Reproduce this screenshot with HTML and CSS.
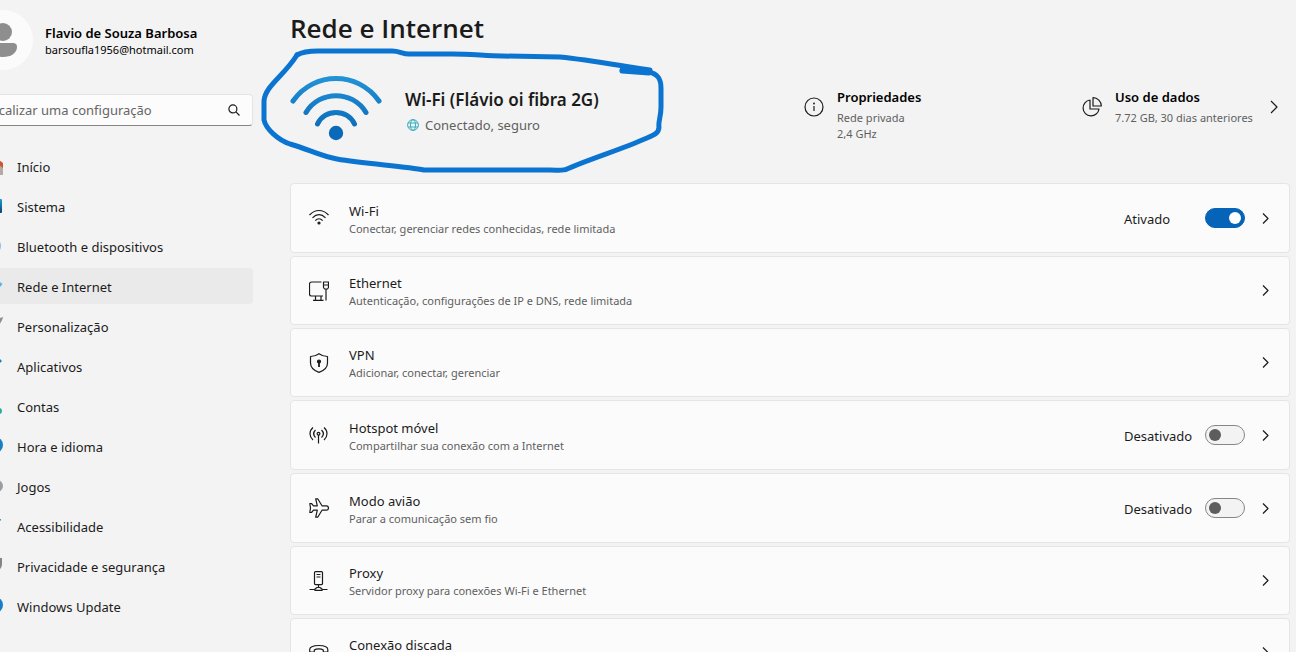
FILE: index.html
```html
<!DOCTYPE html>
<html lang="pt-BR">
	<head>
		<meta charset="utf-8">
		<title>Configurações</title>
		<link rel="stylesheet" href="styles.css">
	</head>
	<body>
		<aside class="sidebar">
			<div class="account">
				<svg class="avatar" viewBox="0 0 60 60">
					<circle cx="30" cy="30" r="30" fill="#fbfbfb"/>
					<circle cx="30" cy="22" r="9" fill="#8e8e8e"/>
					<path d="M20 33h20a4 4 0 0 1 4 4c0 6-6 10-14 10s-14-4-14-10a4 4 0 0 1 4-4z" fill="#8e8e8e"/>
				</svg>
				<div>
					<div class="name">Flavio de Souza Barbosa</div>
					<div class="email">barsoufla1956@hotmail.com</div>
				</div>
			</div>
			<form class="search">
				<input type="text" placeholder="Localizar uma configuração" aria-label="Localizar uma configuração">
				<button type="button" aria-label="Pesquisar">
					<svg width="12" height="12" viewBox="0 0 12 12" class="line"><circle cx="4.9" cy="4.9" r="4"/><path d="M7.9 7.9l3.6 3.6"/></svg>
				</button>
			</form>
			<nav class="menu">
				<a href="#"><svg viewBox="0 0 20 20"><path d="M3 8v10h15V8L10 2z" fill="#b3aca6"/><path d="M1 7l9-7 8 6v5l-8-6-7 6z" fill="#d0562b"/></svg>Início</a>
				<a href="#"><svg viewBox="0 0 20 20"><defs><linearGradient id="sys" x2="0" y2="1"><stop offset="0" stop-color="#1f9fd0"/><stop offset="1" stop-color="#0a3f7c"/></linearGradient></defs><rect x="1" y="2" width="16" height="14" rx="1" fill="url(#sys)"/></svg>Sistema</a>
				<a href="#"><svg viewBox="0 0 20 20"><circle cx="8" cy="9" r="8" fill="#8dbde8"/></svg>Bluetooth e dispositivos</a>
				<a href="#" class="current"><svg viewBox="0 0 20 20"><path d="M9 .5L17.500 7 15.500 9.500 9 16 1 7z" fill="#4cb8ea"/></svg>Rede e Internet</a>
				<a href="#"><svg viewBox="0 0 20 20"><path d="M18 0c-1 5-4 8-8 11L7 8c3-4 6-7 11-8z" fill="#8c8f94"/></svg>Personalização</a>
				<a href="#"><svg viewBox="0 0 20 20"><path d="M13 0l4 4-4 4-4-4z" fill="#1687cc"/><path d="M2 6h9v11H2z" fill="#1687cc"/></svg>Aplicativos</a>
				<a href="#"><svg viewBox="0 0 20 20"><circle cx="9" cy="6" r="4" fill="#25ad9b"/><rect x="2" y="11" width="15" height="6" rx="3" fill="#25ad9b"/></svg>Contas</a>
				<a href="#"><svg viewBox="0 0 20 20"><circle cx="10" cy="8" r="8" fill="#187fc4"/></svg>Hora e idioma</a>
				<a href="#"><svg viewBox="0 0 20 20"><rect x="0" y="3" width="18" height="12" rx="6" fill="#9a9ea4"/></svg>Jogos</a>
				<a href="#"><svg viewBox="0 0 20 20"><circle cx="9" cy="3" r="2" fill="#2b88c8"/><path d="M2 3l7 1 7-2v1L12 7v9H7V7z" fill="#2b88c8"/></svg>Acessibilidade</a>
				<a href="#"><svg viewBox="0 0 20 20"><path d="M10 0c3 1 5 1 7 1v6c0 4-3 7-7 9-4-2-8-5-8-9V1c3 0 5 0 8-1z" fill="#81868d"/></svg>Privacidade e segurança</a>
				<a href="#"><svg viewBox="0 0 20 20"><circle cx="10" cy="8" r="8" fill="#1580c9"/></svg>Windows Update</a>
			</nav>
		</aside>
		<main class="page">
			<h1>Rede e Internet</h1>
			<section class="hero">
				<div class="connection">
					<svg class="wifi" viewBox="0 0 92 66" width="92" height="66">
						<defs>
							<linearGradient id="signal" gradientUnits="userSpaceOnUse" x1="0" y1="0" x2="0" y2="66"><stop offset="0" stop-color="#2394d6"/><stop offset="1" stop-color="#0663b5"/></linearGradient>
						</defs>
						<g fill="none" stroke="url(#signal)" stroke-width="5" stroke-linecap="round">
							<path d="M3 26C24-4 68-4 89 26"/>
							<path d="M16 37.500C29 15 63 15 76 37.500"/>
							<path d="M27.500 49C34 33.500 58 33.500 64.500 49"/>
						</g>
						<circle cx="46" cy="58" r="7.200" fill="#0b69b9"/>
					</svg>
					<div>
						<h2>Wi-Fi (Flávio oi fibra 2G)</h2>
						<p class="status">
							<svg width="12" height="12" viewBox="0 0 12 12" fill="none" stroke="#38aebd"><circle cx="6" cy="6" r="5.400"/><ellipse cx="6" cy="6" rx="2.500" ry="5.400"/><path d="M1 4h10M1 8h10"/></svg>
							Conectado, seguro
						</p>
					</div>
					<svg class="marker" viewBox="255 45 415 130" width="415" height="130">
						<path d="M297 55C302 52 308 51 318 51H392C400 51 402 54 409 54H452C470 54 488 56 502 56L560 57C590 60 622 66 650 70"/>
						<path d="M622 70L649 72C658 74 661 79 661 88V107C661 117 658 122 659 127C659 133 654 135 647 138C620 150 592 158 567 169C563 171 558 170 550 170H424C405 166 365 164 337 159C320 156 308 149 290 144C278 140 266 129 264 120V101C265 86 284 76 297 55"/>
						<path d="M622 71L649 73"/>
					</svg>
				</div>
				<a href="#" class="info">
					<svg width="20" height="20" viewBox="0 0 20 20" class="line"><circle cx="10" cy="10" r="9"/><path d="M10 9v5"/><circle cx="10" cy="6.500" r=".4"/></svg>
					<div>
						<h3>Propriedades</h3>
						<p>Rede privada</p>
						<p>2,4 GHz</p>
					</div>
				</a>
				<a href="#" class="info">
					<svg width="20" height="20" viewBox="0 0 20 20" class="line"><path d="M8 3a8 8 0 1 0 9 9H8z"/><path d="M11 .700V9h8.300A8.300 8.300 0 0 0 11 .700z"/></svg>
					<div>
						<h3>Uso de dados</h3>
						<p>7.72 GB, 30 dias anteriores</p>
					</div>
					<svg class="line arrow" width="8" height="14" viewBox="0 0 8 14"><path d="M1 1l6 6-6 6"/></svg>
				</a>
			</section>
			<section class="cards">
				<div class="card switchable">
					<svg class="line" viewBox="0 0 20 20"><path d="M.500 7C6 1 14 1 19.500 7M3.500 9.800c4-4.300 9-4.300 13 0M6.300 12.600c2.300-2.500 5.100-2.500 7.400 0"/><circle cx="10" cy="15" r="1" fill="#1b1b1b"/></svg>
					<div class="text"><h4>Wi-Fi</h4><p>Conectar, gerenciar redes conhecidas, rede limitada</p></div>
					<label for="wifi">Ativado</label>
					<input type="checkbox" id="wifi" class="toggle" checked>
					<button type="button" class="open" aria-label="Abrir Wi-Fi"><svg class="line" viewBox="0 0 7 11"><path d="M1 .500l5 5-5 5"/></svg></button>
				</div>
				<div class="card">
					<svg class="line" viewBox="0 0 20 20"><path d="M12.500 1H2.500a2 2 0 0 0-2 2v10a2 2 0 0 0 2 2H14M6.500 15v4M12 15v4M4 19.400h10.500M14.500 1h5v5.500l-1 1.500h-3l-1-1.500zM14.500 4h5M17 8v11.500"/></svg>
					<div class="text"><h4>Ethernet</h4><p>Autenticação, configurações de IP e DNS, rede limitada</p></div>
					<button type="button" class="open" aria-label="Abrir Ethernet"><svg class="line" viewBox="0 0 7 11"><path d="M1 .500l5 5-5 5"/></svg></button>
				</div>
				<div class="card">
					<svg class="line" viewBox="0 0 20 20"><path d="M10 .700C12.500 2.500 15 3.300 18.500 3.500V10c0 5-4 7.800-8.500 9.400C5.500 17.800 1.500 15 1.500 10V3.500C5 3.300 7.500 2.500 10 .700z"/><circle cx="10" cy="8.500" r="1.500" fill="#1b1b1b"/><path d="M10 9v5" stroke-width="1.800"/></svg>
					<div class="text"><h4>VPN</h4><p>Adicionar, conectar, gerenciar</p></div>
					<button type="button" class="open" aria-label="Abrir VPN"><svg class="line" viewBox="0 0 7 11"><path d="M1 .500l5 5-5 5"/></svg></button>
				</div>
				<div class="card switchable">
					<svg class="line" viewBox="0 0 20 20"><path d="M4 2.500c-4 3.500-4 9 0 12.500M15 2.500c4 3.500 4 9 0 12.500M6.500 5c-2.300 2.300-2.300 5.200 0 7.500M12.500 5c2.300 2.300 2.300 5.200 0 7.500M9.500 10v8.500"/><circle cx="9.500" cy="8.700" r="1.400"/></svg>
					<div class="text"><h4>Hotspot móvel</h4><p>Compartilhar sua conexão com a Internet</p></div>
					<label for="hotspot">Desativado</label>
					<input type="checkbox" id="hotspot" class="toggle">
					<button type="button" class="open" aria-label="Abrir Hotspot móvel"><svg class="line" viewBox="0 0 7 11"><path d="M1 .500l5 5-5 5"/></svg></button>
				</div>
				<div class="card switchable">
					<svg class="line" viewBox="0 0 20 20"><path d="M6.700 .800h2L13 7.800h4.500c2.600 0 2.600 4.400 0 4.400H13l-4.300 7h-2L8.300 12.200H4.500L2.500 14.500H.800L1.500 10 .800 5.500h1.700l2 2.300h3.800z"/></svg>
					<div class="text"><h4>Modo avião</h4><p>Parar a comunicação sem fio</p></div>
					<label for="aviao">Desativado</label>
					<input type="checkbox" id="aviao" class="toggle">
					<button type="button" class="open" aria-label="Abrir Modo avião"><svg class="line" viewBox="0 0 7 11"><path d="M1 .500l5 5-5 5"/></svg></button>
				</div>
				<div class="card">
					<svg class="line" viewBox="0 0 20 20"><path d="M6.500 .600h6a1 1 0 0 1 1 1v11a1 1 0 0 1-1 1h-6a1 1 0 0 1-1-1v-11a1 1 0 0 1 1-1zM7.500 3.500h4M7.500 6h4M9.500 13.500v3M.500 18.500h5.500M13 18.500h5.500M6 19.400v-1.400l2-1.500h3l2 1.500v1.400z"/></svg>
					<div class="text"><h4>Proxy</h4><p>Servidor proxy para conexões Wi-Fi e Ethernet</p></div>
					<button type="button" class="open" aria-label="Abrir Proxy"><svg class="line" viewBox="0 0 7 11"><path d="M1 .500l5 5-5 5"/></svg></button>
				</div>
				<div class="card">
					<svg class="line" viewBox="0 0 20 20"><path d="M.700 6.500C.700 3.500 5 2.500 10 2.500s8.800 1 8.800 4v2.500h-4.500V7c-2-1.500-7-1.500-9 0v2H.700zM5.500 9L3 17.500h13.500L14.300 9"/><circle cx="10" cy="12" r="2.500"/></svg>
					<div class="text"><h4>Conexão discada</h4></div>
					<button type="button" class="open" aria-label="Abrir Conexão discada"><svg class="line" viewBox="0 0 7 11"><path d="M1 .500l5 5-5 5"/></svg></button>
				</div>
			</section>
		</main>
	</body>
</html>
```
FILE: styles.css
```css
*
{
	box-sizing:border-box;
}
body
{
	display:flex;
	height:100vh;
	margin:0;
	overflow:hidden;
	background:#f3f3f3;
	color:#1b1b1b;
	font-family:"Segoe UI","Noto Sans",sans-serif;
	font-size:13px;
	line-height:20px;
}
h1,h2,h3,h4,p
{
	margin:0;
	font-weight:normal;
}
h4
{
	font-size:13px;
}
a
{
	color:inherit;
	text-decoration:none;
}
button
{
	padding:0;
	border:0;
	background:none;
}
.line
{
	fill:none;
	stroke:#1b1b1b;
	stroke-width:1.2;
	stroke-linejoin:round;
}

.sidebar
{
	flex:none;
	width:280px;
	margin-left:-27px;
}
.account
{
	display:flex;
	align-items:center;
	gap:12px;
	height:60px;
	margin-top:10px;
}
.avatar
{
	width:60px;
	height:60px;
}
.name
{
	padding-top:2px;
	font-weight:600;
	line-height:18px;
	color:#000;
}
.email
{
	font-size:11px;
	line-height:16px;
	color:#000;
}
.search
{
	display:flex;
	height:32px;
	margin-top:24px;
	border:1px solid #e5e5e5;
	border-bottom-color:#868686;
	border-radius:4px;
	background:#fcfcfc;
}
.search input
{
	flex:1;
	min-width:0;
	padding:0 10px;
	border:0;
	outline:0;
	background:none;
	font:inherit;
}
.search input::placeholder
{
	color:#666;
}
.search button
{
	display:flex;
	align-items:center;
	justify-content:center;
	width:36px;
}
.menu
{
	display:flex;
	flex-direction:column;
	gap:4px;
	margin-top:22px;
}
.menu a
{
	display:flex;
	align-items:center;
	gap:12px;
	height:36px;
	padding:2px 0 0 12px;
	border-radius:4px;
}
.menu svg
{
	width:20px;
	height:20px;
}
.menu .current
{
	background:#eaeaea;
}

.page
{
	flex:1;
	padding:10px 6px 0 37px;
}
h1
{
	font-family:"Segoe UI","Open Sans",sans-serif;
	font-size:26px;
	font-weight:600;
	line-height:36px;
}
.hero
{
	display:grid;
	grid-template-columns:1fr 278px 208px;
	height:137px;
}
.connection
{
	position:relative;
	display:flex;
	gap:23px;
	padding-top:42px;
}
.wifi
{
	margin-top:-13px;
}
h2
{
	font-size:17px;
	font-weight:600;
	line-height:24px;
}
.status
{
	display:flex;
	align-items:center;
	gap:6px;
	margin-top:3px;
	padding-left:2px;
	color:#5f5f5f;
}
/* traço de caneta em volta da conexão */
.marker
{
	position:absolute;
	top:-1px;
	left:-35px;
	fill:none;
	stroke:#0b74d1;
	stroke-width:5;
	stroke-linecap:round;
	stroke-linejoin:round;
	pointer-events:none;
}
.info
{
	display:flex;
	align-items:flex-start;
	gap:13px;
	padding-top:41px;
}
.info svg
{
	flex:none;
	margin-top:10px;
}
.info .arrow
{
	margin:13px 12px 0 auto;
}
h3
{
	margin-bottom:3px;
	font-size:13px;
	font-weight:600;
	color:#000;
}
.info p,
.card p
{
	font-size:11px;
	line-height:16px;
	color:#5f5f5f;
	white-space:nowrap;
}

.cards
{
	display:flex;
	flex-direction:column;
	gap:3px;
}
.card
{
	display:flex;
	flex:none;
	align-items:center;
	height:69px;
	padding:0 20px 0 18px;
	border:1px solid #e5e5e5;
	border-radius:4px;
	background:#fbfbfb;
}
.switchable
{
	height:70px;
}
.card > svg
{
	width:20px;
	height:20px;
}
.text
{
	flex:1;
	min-height:36px;
	padding-left:20px;
}
.switchable .text,
.card label
{
	padding-top:2px;
}
.card label
{
	width:81px;
}
.toggle
{
	appearance:none;
	display:flex;
	align-items:center;
	width:40px;
	height:20px;
	margin:0;
	padding:0 3px;
	border:1px solid #868686;
	border-radius:10px;
	background:#f3f3f3;
}
.toggle::before
{
	content:"";
	width:12px;
	height:12px;
	border-radius:50%;
	background:#5d5d5d;
}
.toggle:checked
{
	justify-content:flex-end;
	border-color:#0563b8;
	background:#0563b8;
}
.toggle:checked::before
{
	background:#fff;
}
.open
{
	display:flex;
	margin-left:17px;
}
.open svg
{
	width:7px;
	height:11px;
}
```
